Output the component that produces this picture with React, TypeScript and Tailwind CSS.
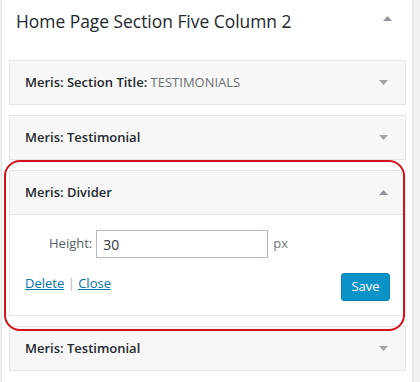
const Arrow = ({ up }: { up?: boolean }) => (
  <svg width="9" height="5" viewBox="0 0 9 5" className="block">
    {up ? (
      <polygon points="0,5 4.5,0 9,5" fill="#8f959a" />
    ) : (
      <polygon points="0,0 9,0 4.5,5" fill="#a0a5aa" />
    )}
  </svg>
);

const WidgetHead = ({ title, extra, up }: { title: string; extra?: string; up?: boolean }) => (
  <div className="flex h-[43px] items-center justify-between pl-[15px] pr-[17px]">
    <span className="text-[13px] font-semibold text-[#23282d]">
      {title}
      {extra && <span className="font-normal text-[#6b6e72]"> {extra}</span>}
    </span>
    <Arrow up={up} />
  </div>
);

const App = () => {
  return (
    <div
      className="h-[382px] w-[420px] overflow-hidden bg-[#f1f1f1]"
      style={{ fontFamily: '"Open Sans", "Liberation Sans", sans-serif' }}
    >
      <div className="relative ml-[1px] h-[382px] w-[412px] border-x border-[#e5e5e5] bg-white">
        {/* titulo del sidebar */}
        <div className="flex h-[60px] items-start justify-between pl-[14px] pr-[20px] pt-[8px]">
          <h2 className="text-[17.4px] leading-[26px] text-[#23282d]">Home Page Section Five Column 2</h2>
          <div className="pt-[8px]">
            <Arrow up />
          </div>
        </div>

        <div className="ml-[7px] flex w-[397px] flex-col gap-[10px]">
          <div className="border border-[#e5e5e5] bg-[#f7f7f7]">
            <WidgetHead title="Meris: Section Title:" extra="TESTIMONIALS" />
          </div>
          <div className="border border-[#e5e5e5] bg-[#f7f7f7]">
            <WidgetHead title="Meris: Testimonial" />
          </div>

          {/* widget abierto */}
          <div className="border border-[#e5e5e5] bg-white">
            <div className="border-b border-[#e5e5e5] bg-[#f7f7f7]">
              <WidgetHead title="Meris: Divider" up />
            </div>
            <div className="px-[15px] pb-[14px] pt-[15px]">
              <div className="flex items-center text-[13px]">
                <label className="ml-[24px] mr-[4px] text-[#555d66]">Height:</label>
                <input
                  defaultValue="30"
                  className="h-[28px] w-[172px] border border-[#b4b9be] px-[6px] text-[14px] text-[#32373c] outline-none"
                />
                <span className="ml-[5px] text-[#72777c]">px</span>
              </div>
              <div className="mt-[15px] flex items-start justify-between">
                <div className="pt-[1px] text-[13px] text-[#b4b9be]">
                  <a className="text-[#0073aa] underline">Delete</a> |{" "}
                  <a className="text-[#0073aa] underline">Close</a>
                </div>
                <button className="h-[28px] w-[49px] rounded-[3px] border border-[#0a80b0] bg-[#0b93c8] text-[13px] text-white">
                  Save
                </button>
              </div>
            </div>
          </div>

          <div className="border border-[#e5e5e5] bg-[#f7f7f7]">
            <WidgetHead title="Meris: Testimonial" />
          </div>
        </div>

        {/* marca roja */}
        <div className="pointer-events-none absolute left-[2px] top-[160px] h-[171px] w-[401px] rounded-[16px] border-2 border-[#d3111b]" />
      </div>
    </div>
  );
};

export default App;
